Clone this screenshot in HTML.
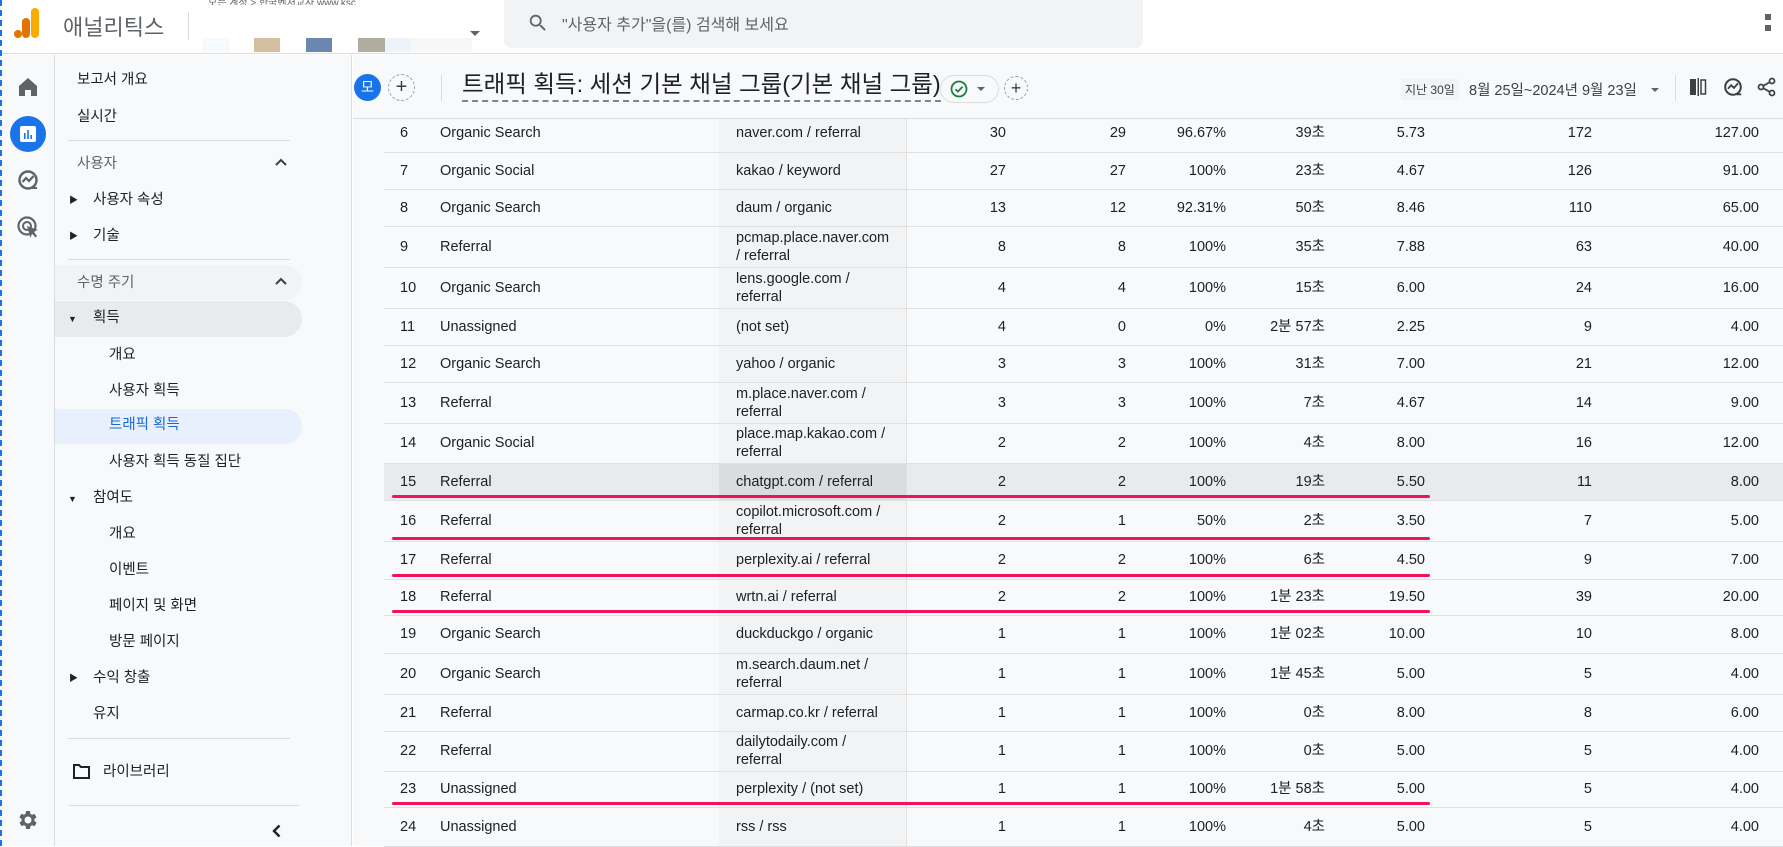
<!DOCTYPE html>
<html><head><meta charset="utf-8">
<style>
*{box-sizing:border-box;margin:0;padding:0}
body{width:1783px;height:846px;overflow:hidden;background:#fff;font-family:"Liberation Sans","Noto Sans CJK KR",sans-serif;color:#202124;position:relative}
.abs{position:absolute}
#top{left:0;top:0;width:1783px;height:54px;background:#fff;border-bottom:1px solid #dadce0}
#rail{left:0;top:55px;width:55px;height:791px;background:#f8f9fa;border-right:1px solid #dadce0}
#side{left:55px;top:55px;width:297px;height:791px;background:#f8f9fa;border-right:1px solid #dadce0}
.si{position:absolute;font-size:14.5px;color:#202124;white-space:nowrap;line-height:18px}
.hr{position:absolute;height:1px;background:#dadce0}
#content{left:353px;top:55px;width:1430px;height:791px;background:#f8f9fa}
#hdr{left:353px;top:55px;width:1430px;height:64px;background:#f8f9fa;border-bottom:1px solid #dadce0;z-index:2}
table{position:absolute;left:384px;top:114px;width:1399px;border-collapse:collapse;table-layout:fixed;font-size:14.5px;line-height:18px}
td{border-bottom:1px solid #e0e0e0;padding:0;vertical-align:middle;white-space:nowrap}
td.r{text-align:right;padding-right:10px}
td.s{background:#f1f3f4;padding-left:17px;padding-right:14px;white-space:normal;border-right:1px solid #e0e0e0}
tr.g td{background:#f8f9fa}
tr.g td.s{background:#f1f3f4}
tr.h td{background:#e8eaed}
tr.h td.s{background:#dadce0}
td.n{padding-left:16px}
td.c{padding-left:4px}
.red{position:absolute;left:392px;width:1038px;height:3px;background:#f0135a;border-radius:2px;z-index:3}
</style></head><body>

<div id="top" class="abs">
  <svg class="abs" style="left:14px;top:8px" width="26" height="30" viewBox="0 0 26 30"><rect x="17" y="0" width="8" height="30" rx="4" fill="#f9ab00"/><rect x="8" y="10" width="8" height="20" rx="4" fill="#e37400"/><circle cx="4" cy="26" r="4" fill="#e37400"/></svg>
  <div class="abs" style="left:63px;top:10px;font-size:22px;color:#5f6368">애널리틱스</div>
  <div class="abs" style="left:188px;top:12px;width:1px;height:28px;background:#dadce0"></div>
  <div class="abs" style="left:208px;top:0px;font-size:10px;color:#5f6368;height:5px;overflow:hidden;line-height:8px">모든 계정 &gt; 한국벤처교사 www.ksc</div>
  <div class="abs" style="left:202px;top:38px;width:28px;height:14px;background:#f5fafd"></div>
  <div class="abs" style="left:254px;top:38px;width:26px;height:14px;background:#d4c0a0"></div>
  <div class="abs" style="left:306px;top:38px;width:26px;height:14px;background:#6b87b0"></div>
  <div class="abs" style="left:358px;top:38px;width:27px;height:14px;background:#b0aca0"></div>
  <div class="abs" style="left:385px;top:38px;width:25px;height:14px;background:#edf3fa"></div>
  <div class="abs" style="left:410px;top:38px;width:62px;height:14px;background:#f5f7f8"></div>
  <div class="abs" style="left:470px;top:31px;width:0;height:0;border-left:5px solid transparent;border-right:5px solid transparent;border-top:5px solid #5f6368"></div>
  <div class="abs" style="left:504px;top:0;width:639px;height:48px;background:#f1f3f4;border-radius:0 0 8px 8px"></div>
  <svg class="abs" style="left:527px;top:12px" width="22" height="22" viewBox="0 0 24 24"><path d="M15.5 14h-.79l-.28-.27A6.47 6.47 0 0016 9.5 6.5 6.5 0 109.5 16c1.61 0 3.09-.59 4.23-1.57l.27.28v.79l5 4.99L20.49 19l-4.99-5zm-6 0C7.01 14 5 11.99 5 9.5S7.01 5 9.5 5 14 7.01 14 9.5 11.99 14 9.5 14z" fill="#5f6368"/></svg>
  <div class="abs" style="left:562px;top:11px;font-size:16px;color:#5f6368">"사용자 추가"을(를) 검색해 보세요</div>
  <div class="abs" style="left:1765px;top:14px;width:6px;height:6px;background:#5f6368"></div>
  <div class="abs" style="left:1765px;top:25px;width:6px;height:6px;background:#5f6368"></div>
</div>
<div class="abs" style="left:0;top:0;width:2px;height:846px;border-left:2px dashed #1a73e8;z-index:5"></div>

<div id="rail" class="abs">
  <svg class="abs" style="left:16px;top:20px" width="24" height="24" viewBox="0 0 24 24"><path d="M12 3L3 11v10h6v-6h6v6h6V11z" fill="#5f6368"/></svg>
  <div class="abs" style="left:10px;top:61px;width:36px;height:36px;border-radius:50%;background:#1a73e8"></div>
  <svg class="abs" style="left:18px;top:69px" width="20" height="20" viewBox="0 0 20 20"><rect x="2" y="2" width="16" height="16" rx="2" fill="#fff"/><rect x="6" y="9" width="1.6" height="6" fill="#1a73e8"/><rect x="9.2" y="6" width="1.6" height="9" fill="#1a73e8"/><rect x="12.4" y="11" width="1.6" height="4" fill="#1a73e8"/></svg>
  <svg class="abs" style="left:16px;top:113px" width="24" height="24" viewBox="0 0 24 24"><circle cx="12" cy="12" r="8.5" fill="none" stroke="#5f6368" stroke-width="2.4"/><path d="M6.5 14l3.5-4 3 3 4.5-5" fill="none" stroke="#5f6368" stroke-width="2.2"/><path d="M16 19h5v2h-5z" fill="#5f6368"/></svg>
  <svg class="abs" style="left:16px;top:160px" width="24" height="24" viewBox="0 0 24 24"><circle cx="11" cy="11" r="8.5" fill="none" stroke="#5f6368" stroke-width="2.2"/><circle cx="11" cy="11" r="4" fill="none" stroke="#5f6368" stroke-width="2"/><path d="M11 11l11 4-4.5 1.5L21 21l-1.5 1.5-3.5-4L14.5 23z" fill="#5f6368"/></svg>
  <svg class="abs" style="left:16px;top:753px" width="24" height="24" viewBox="0 0 24 24"><path d="M19.4 13a7.5 7.5 0 000-2l2.1-1.6-2-3.5-2.5 1a7.3 7.3 0 00-1.7-1L15 3h-4l-.4 2.7a7.3 7.3 0 00-1.7 1l-2.5-1-2 3.5L6.6 11a7.5 7.5 0 000 2l-2.1 1.6 2 3.5 2.5-1c.5.4 1.1.7 1.7 1L11 21h4l.4-2.7c.6-.3 1.2-.6 1.7-1l2.5 1 2-3.5zM13 15.5a3.5 3.5 0 110-7 3.5 3.5 0 010 7z" fill="#5f6368" transform="translate(-1 0)"/></svg>
</div>

<div id="side" class="abs">
  <div class="abs" style="left:0;top:210px;width:247px;height:35px;background:#f1f3f4;border-radius:0 18px 18px 0"></div>
  <div class="abs" style="left:0;top:246px;width:247px;height:36px;background:#e8eaed;border-radius:0 18px 18px 0"></div>
  <div class="abs" style="left:0;top:354px;width:247px;height:35px;background:#e8f0fe;border-radius:0 18px 18px 0"></div>
</div>
<div class="si" style="left:77px;top:71px">보고서 개요</div>
<div class="si" style="left:77px;top:108px">실시간</div>
<div class="hr" style="left:68px;top:140px;width:222px"></div>
<div class="si" style="left:77px;top:155px;color:#5f6368">사용자</div>
<svg class="abs" style="left:275px;top:158px" width="12" height="8" viewBox="0 0 12 8"><path d="M1 7l5-5 5 5" fill="none" stroke="#3c4043" stroke-width="2"/></svg>
<div class="si" style="left:69px;top:191px;font-size:9px">&#9654;</div>
<div class="si" style="left:93px;top:191px">사용자 속성</div>
<div class="si" style="left:69px;top:227px;font-size:9px">&#9654;</div>
<div class="si" style="left:93px;top:227px">기술</div>
<div class="hr" style="left:68px;top:259px;width:222px"></div>
<div class="si" style="left:77px;top:274px;color:#5f6368">수명 주기</div>
<svg class="abs" style="left:275px;top:277px" width="12" height="8" viewBox="0 0 12 8"><path d="M1 7l5-5 5 5" fill="none" stroke="#3c4043" stroke-width="2"/></svg>
<div class="si" style="left:68px;top:310px;font-size:9px">&#9660;</div>
<div class="si" style="left:93px;top:309px">획득</div>
<div class="si" style="left:109px;top:346px">개요</div>
<div class="si" style="left:109px;top:382px">사용자 획득</div>
<div class="si" style="left:109px;top:416px;color:#1967d2">트래픽 획득</div>
<div class="si" style="left:109px;top:453px">사용자 획득 동질 집단</div>
<div class="si" style="left:68px;top:490px;font-size:9px">&#9660;</div>
<div class="si" style="left:93px;top:489px">참여도</div>
<div class="si" style="left:109px;top:525px">개요</div>
<div class="si" style="left:109px;top:561px">이벤트</div>
<div class="si" style="left:109px;top:597px">페이지 및 화면</div>
<div class="si" style="left:109px;top:633px">방문 페이지</div>
<div class="si" style="left:69px;top:669px;font-size:9px">&#9654;</div>
<div class="si" style="left:93px;top:669px">수익 창출</div>
<div class="si" style="left:93px;top:705px">유지</div>
<div class="hr" style="left:68px;top:738px;width:222px"></div>
<svg class="abs" style="left:73px;top:764px" width="17" height="15" viewBox="0 0 17 15"><path d="M1 1h5l2 2h8v11H1z" fill="none" stroke="#202124" stroke-width="2"/></svg>
<div class="si" style="left:103px;top:763px">라이브러리</div>
<div class="hr" style="left:69px;top:805px;width:230px"></div>
<svg class="abs" style="left:272px;top:824px" width="9" height="14" viewBox="0 0 9 14"><path d="M7.5 1.5L2 7l5.5 5.5" fill="none" stroke="#202124" stroke-width="2.4"/></svg>

<div id="content" class="abs"></div>

<table>
<colgroup><col style="width:52px"><col style="width:283px"><col style="width:187px"><col style="width:110px"><col style="width:120px"><col style="width:100px"><col style="width:99px"><col style="width:100px"><col style="width:167px"><col style="width:181px"></colgroup>
<tr style="height:38px"><td class="n">6</td><td class="c">Organic Search</td><td class="s">naver.com / referral</td><td class="r">30</td><td class="r">29</td><td class="r">96.67%</td><td class="r">39초</td><td class="r">5.73</td><td class="r">172</td><td class="r" style="padding-right:24px">127.00</td></tr>
<tr class="g" style="height:37px"><td class="n">7</td><td class="c">Organic Social</td><td class="s">kakao / keyword</td><td class="r">27</td><td class="r">27</td><td class="r">100%</td><td class="r">23초</td><td class="r">4.67</td><td class="r">126</td><td class="r" style="padding-right:24px">91.00</td></tr>
<tr style="height:37px"><td class="n">8</td><td class="c">Organic Search</td><td class="s">daum / organic</td><td class="r">13</td><td class="r">12</td><td class="r">92.31%</td><td class="r">50초</td><td class="r">8.46</td><td class="r">110</td><td class="r" style="padding-right:24px">65.00</td></tr>
<tr class="g" style="height:41px"><td class="n">9</td><td class="c">Referral</td><td class="s">pcmap.place.naver.com<br>/ referral</td><td class="r">8</td><td class="r">8</td><td class="r">100%</td><td class="r">35초</td><td class="r">7.88</td><td class="r">63</td><td class="r" style="padding-right:24px">40.00</td></tr>
<tr style="height:41px"><td class="n">10</td><td class="c">Organic Search</td><td class="s">lens.google.com /<br>referral</td><td class="r">4</td><td class="r">4</td><td class="r">100%</td><td class="r">15초</td><td class="r">6.00</td><td class="r">24</td><td class="r" style="padding-right:24px">16.00</td></tr>
<tr class="g" style="height:37px"><td class="n">11</td><td class="c">Unassigned</td><td class="s">(not set)</td><td class="r">4</td><td class="r">0</td><td class="r">0%</td><td class="r">2분 57초</td><td class="r">2.25</td><td class="r">9</td><td class="r" style="padding-right:24px">4.00</td></tr>
<tr style="height:37px"><td class="n">12</td><td class="c">Organic Search</td><td class="s">yahoo / organic</td><td class="r">3</td><td class="r">3</td><td class="r">100%</td><td class="r">31초</td><td class="r">7.00</td><td class="r">21</td><td class="r" style="padding-right:24px">12.00</td></tr>
<tr class="g" style="height:41px"><td class="n">13</td><td class="c">Referral</td><td class="s">m.place.naver.com /<br>referral</td><td class="r">3</td><td class="r">3</td><td class="r">100%</td><td class="r">7초</td><td class="r">4.67</td><td class="r">14</td><td class="r" style="padding-right:24px">9.00</td></tr>
<tr style="height:40px"><td class="n">14</td><td class="c">Organic Social</td><td class="s">place.map.kakao.com /<br>referral</td><td class="r">2</td><td class="r">2</td><td class="r">100%</td><td class="r">4초</td><td class="r">8.00</td><td class="r">16</td><td class="r" style="padding-right:24px">12.00</td></tr>
<tr class="h" style="height:37px"><td class="n">15</td><td class="c">Referral</td><td class="s">chatgpt.com / referral</td><td class="r">2</td><td class="r">2</td><td class="r">100%</td><td class="r">19초</td><td class="r">5.50</td><td class="r">11</td><td class="r" style="padding-right:24px">8.00</td></tr>
<tr style="height:41px"><td class="n">16</td><td class="c">Referral</td><td class="s">copilot.microsoft.com /<br>referral</td><td class="r">2</td><td class="r">1</td><td class="r">50%</td><td class="r">2초</td><td class="r">3.50</td><td class="r">7</td><td class="r" style="padding-right:24px">5.00</td></tr>
<tr class="g" style="height:38px"><td class="n">17</td><td class="c">Referral</td><td class="s">perplexity.ai / referral</td><td class="r">2</td><td class="r">2</td><td class="r">100%</td><td class="r">6초</td><td class="r">4.50</td><td class="r">9</td><td class="r" style="padding-right:24px">7.00</td></tr>
<tr style="height:36px"><td class="n">18</td><td class="c">Referral</td><td class="s">wrtn.ai / referral</td><td class="r">2</td><td class="r">2</td><td class="r">100%</td><td class="r">1분 23초</td><td class="r">19.50</td><td class="r">39</td><td class="r" style="padding-right:24px">20.00</td></tr>
<tr class="g" style="height:38px"><td class="n">19</td><td class="c">Organic Search</td><td class="s">duckduckgo / organic</td><td class="r">1</td><td class="r">1</td><td class="r">100%</td><td class="r">1분 02초</td><td class="r">10.00</td><td class="r">10</td><td class="r" style="padding-right:24px">8.00</td></tr>
<tr style="height:41px"><td class="n">20</td><td class="c">Organic Search</td><td class="s">m.search.daum.net /<br>referral</td><td class="r">1</td><td class="r">1</td><td class="r">100%</td><td class="r">1분 45초</td><td class="r">5.00</td><td class="r">5</td><td class="r" style="padding-right:24px">4.00</td></tr>
<tr class="g" style="height:37px"><td class="n">21</td><td class="c">Referral</td><td class="s">carmap.co.kr / referral</td><td class="r">1</td><td class="r">1</td><td class="r">100%</td><td class="r">0초</td><td class="r">8.00</td><td class="r">8</td><td class="r" style="padding-right:24px">6.00</td></tr>
<tr style="height:40px"><td class="n">22</td><td class="c">Referral</td><td class="s">dailytodaily.com /<br>referral</td><td class="r">1</td><td class="r">1</td><td class="r">100%</td><td class="r">0초</td><td class="r">5.00</td><td class="r">5</td><td class="r" style="padding-right:24px">4.00</td></tr>
<tr class="g" style="height:36px"><td class="n">23</td><td class="c">Unassigned</td><td class="s">perplexity / (not set)</td><td class="r">1</td><td class="r">1</td><td class="r">100%</td><td class="r">1분 58초</td><td class="r">5.00</td><td class="r">5</td><td class="r" style="padding-right:24px">4.00</td></tr>
<tr style="height:39px"><td class="n">24</td><td class="c">Unassigned</td><td class="s">rss / rss</td><td class="r">1</td><td class="r">1</td><td class="r">100%</td><td class="r">4초</td><td class="r">5.00</td><td class="r">5</td><td class="r" style="padding-right:24px">4.00</td></tr>
</table>

<div class="red" style="top:495px"></div>
<div class="red" style="top:537px"></div>
<div class="red" style="top:574px"></div>
<div class="red" style="top:610px"></div>
<div class="red" style="top:802px"></div>

<div id="hdr" class="abs">
  <div class="abs" style="top:19px;width:27px;height:27px;border-radius:50%;background:#1a73e8;color:#fff;font-size:14px;text-align:center;line-height:27px;left:1px">모</div>
  <div class="abs" style="left:35px;top:19px;width:27px;height:27px;border-radius:50%;border:1px dashed #9aa0a6;color:#3c4043;font-size:20px;text-align:center;line-height:24px">+</div>
  <div class="abs" style="left:88px;top:20px;width:1px;height:26px;background:#dadce0"></div>
  <div class="abs" style="left:109px;top:14px;font-size:23.5px;color:#202124;white-space:nowrap;border-bottom:2px dashed #80868b;line-height:31px">트래픽 획득: 세션 기본 채널 그룹(기본 채널 그룹)</div>
  <div class="abs" style="left:587px;top:20px;width:59px;height:28px;border:1px solid #dadce0;border-radius:14px"></div>
  <svg class="abs" style="left:597px;top:25px" width="18" height="18" viewBox="0 0 18 18"><circle cx="9" cy="9" r="7.5" fill="none" stroke="#188038" stroke-width="1.8"/><path d="M5.5 9.2l2.4 2.4 4.6-4.8" fill="none" stroke="#188038" stroke-width="1.8"/></svg>
  <div class="abs" style="left:624px;top:32px;border-left:4px solid transparent;border-right:4px solid transparent;border-top:4px solid #5f6368"></div>
  <div class="abs" style="left:651px;top:21px;width:24px;height:24px;border-radius:50%;border:1px dashed #9aa0a6;color:#3c4043;font-size:18px;text-align:center;line-height:22px">+</div>
  <div class="abs" style="left:1048px;top:24px;padding:2px 4px;background:#f1f3f4;font-size:12px;color:#3c4043">지난 30일</div>
  <div class="abs" style="left:1116px;top:24px;font-size:14.5px;color:#3c4043;white-space:nowrap">8월 25일~2024년 9월 23일</div>
  <div class="abs" style="left:1298px;top:33px;border-left:4px solid transparent;border-right:4px solid transparent;border-top:4px solid #5f6368"></div>
  <div class="abs" style="left:1322px;top:20px;width:1px;height:26px;background:#dadce0"></div>
  <svg class="abs" style="left:1335px;top:22px" width="20" height="20" viewBox="0 0 20 20"><rect x="2" y="2" width="6" height="16" fill="#3c4043"/><rect x="9.5" y="1" width="1.5" height="18" fill="#3c4043"/><rect x="13" y="3" width="4.5" height="14" fill="none" stroke="#3c4043" stroke-width="1.5"/></svg>
  <svg class="abs" style="left:1369px;top:21px" width="22" height="22" viewBox="0 0 24 24"><circle cx="12" cy="12" r="8.5" fill="none" stroke="#3c4043" stroke-width="2.2"/><path d="M6.5 14l3.5-4 3 3 4.5-5" fill="none" stroke="#3c4043" stroke-width="2"/><path d="M16 19h5v2h-5z" fill="#3c4043"/></svg>
  <svg class="abs" style="left:1404px;top:22px" width="20" height="20" viewBox="0 0 20 20"><circle cx="15" cy="4" r="2.5" fill="none" stroke="#3c4043" stroke-width="1.8"/><circle cx="4" cy="10" r="2.5" fill="none" stroke="#3c4043" stroke-width="1.8"/><circle cx="15" cy="16" r="2.5" fill="none" stroke="#3c4043" stroke-width="1.8"/><path d="M6 9l7-4M6 11l7 4" stroke="#3c4043" stroke-width="1.8"/></svg>
</div>
</body></html>
